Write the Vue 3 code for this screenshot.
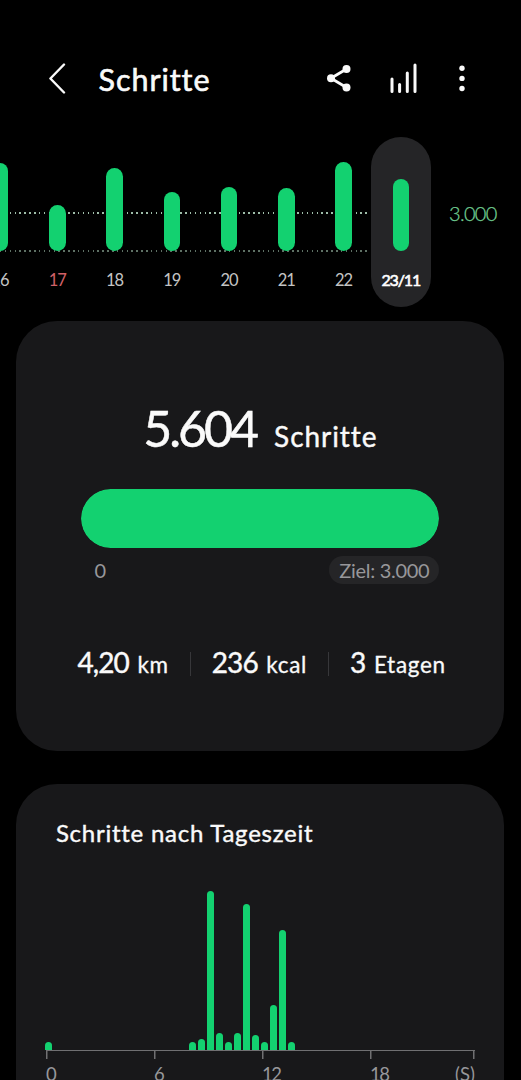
<template>
  <div class="screen">
    <header class="header">
      <button class="icon_button back" aria-label="Zurück">
        <svg width="18" height="32" viewBox="0 0 18 32">
          <path d="M16 1.5 L2.4 15.5 L16 29.5" />
        </svg>
      </button>
      <h1>Schritte</h1>
      <button class="icon_button share" aria-label="Teilen">
        <svg width="26" height="28" viewBox="0 0 26 28">
          <path d="M19.5 4 L4 13.3 L19.5 22.5" />
          <circle cx="19.5" cy="4" r="4" />
          <circle cx="4" cy="13.3" r="4" />
          <circle cx="19.5" cy="22.5" r="4" />
        </svg>
      </button>
      <button class="icon_button stats" aria-label="Statistik">
        <svg width="28" height="32" viewBox="0 0 28 32">
          <path d="M2 16 V28.5 M9.6 21.5 V28.5 M17.3 10 V28.5 M25 2 V28.5" />
        </svg>
      </button>
      <button class="icon_button more" aria-label="Mehr">
        <svg width="6" height="28" viewBox="0 0 6 28">
          <circle cx="3" cy="3.3" r="2.7" />
          <circle cx="3" cy="13.4" r="2.7" />
          <circle cx="3" cy="23.5" r="2.7" />
        </svg>
      </button>
    </header>

    <section class="week">
      <div class="line line_goal"></div>
      <div class="line line_base"></div>
      <div
        class="day"
        v-for="day in days"
        :key="day.label"
        :class="{ active: day.active, sunday: day.sunday }"
      >
        <div class="day_bar" :style="{ height: day.height + 'px' }"></div>
        <span class="day_label">{{ day.label }}</span>
      </div>
      <span class="goal_label">3.000</span>
    </section>

    <section class="card summary">
      <div class="total">
        <span class="total_value">5.604</span>
        <span class="total_unit">Schritte</span>
      </div>
      <div class="progress">
        <div class="progress_fill" :style="{ width: progress + '%' }"></div>
      </div>
      <div class="range">
        <span>0</span>
        <span class="target">Ziel: 3.000</span>
      </div>
      <div class="details">
        <div class="detail" v-for="item in details" :key="item.unit">
          <b>{{ item.value }}</b>
          <span>{{ item.unit }}</span>
        </div>
      </div>
    </section>

    <section class="card daytime">
      <h2>Schritte nach Tageszeit</h2>
      <div class="hours">
        <div
          class="hour_bar"
          v-for="(height, i) in halfHours"
          :key="i"
          :style="{ height: height + 'px' }"
        ></div>
      </div>
      <div class="axis">
        <div class="axis_part" v-for="label in ['0', '6', '12', '18']" :key="label">
          <span>{{ label }}</span>
        </div>
        <span class="axis_unit">(S)</span>
      </div>
    </section>
  </div>
</template>

<script setup>
import { computed, ref } from 'vue'

const steps = ref(5604)
const goal = ref(3000)

const days = ref([
  { label: '16', height: 88 },
  { label: '17', height: 46.5, sunday: true },
  { label: '18', height: 83.5 },
  { label: '19', height: 59.5 },
  { label: '20', height: 64.5 },
  { label: '21', height: 63.5 },
  { label: '22', height: 89 },
  { label: '23/11', height: 72, active: true },
])

const details = ref([
  { value: '4,20', unit: 'km' },
  { value: '236', unit: 'kcal' },
  { value: '3', unit: 'Etagen' },
])

// one bar for every half hour
const halfHours = ref([
  8.3, 0, 0, 0, 0, 0, 0, 0, 0, 0, 0, 0, 0, 0, 0, 0, 8.3, 11, 159.3, 17.3, 8.3, 17, 145.6, 15, 8.3,
  45, 120, 8.3,
])

const progress = computed(() => Math.min(100, (steps.value / goal.value) * 100))
</script>

<style>
body {
  background: #000;
}
</style>

<style scoped>
.screen {
  width: 521px;
  height: 1080px;
  overflow: hidden;
  background: #000;
  color: #fafafa;
  font-family: Lato, 'Open Sans', sans-serif;
  font-variant-ligatures: none;
}
.header {
  display: flex;
  align-items: center;
  height: 137px;
  padding: 20px 0 0 48px;
  box-sizing: border-box;
}
.icon_button {
  display: flex;
  padding: 0;
  border: none;
  background: none;
}
.icon_button svg {
  fill: none;
  stroke: #fafafa;
  stroke-width: 2.4;
  stroke-linecap: round;
  stroke-linejoin: round;
}
.share svg {
  stroke-width: 2.8;
}
.stats svg {
  stroke-width: 3;
}
.icon_button circle {
  fill: #fafafa;
  stroke: none;
}
.header h1 {
  width: 228px;
  margin: 0 0 0 32.5px;
  font-size: 30.5px;
  font-weight: 400;
  letter-spacing: 0.95px;
  line-height: 36px;
  -webkit-text-stroke: 0.6px;
}
.stats {
  margin-left: 37.5px;
}
.more {
  margin-left: 41px;
}
.week {
  position: relative;
  display: flex;
  height: 170px;
  margin-left: -28.6px;
}
.line {
  position: absolute;
  left: 28.6px;
  width: 369px;
  height: 1.5px;
  background: repeating-linear-gradient(90deg, #9dbca8 0 1.5px, transparent 1.5px 4.87px);
}
.line_goal {
  top: 75px;
}
.line_base {
  top: 113px;
  opacity: 0.6;
}
.day {
  position: relative;
  display: flex;
  flex: none;
  flex-direction: column;
  justify-content: flex-end;
  align-items: center;
  width: 57.25px;
  height: 170px;
}
.day_bar {
  width: 16.5px;
  border-radius: 9px;
  background: #13d170;
}
.day_label {
  height: 56px;
  padding-top: 18px;
  box-sizing: border-box;
  color: #c4c4c4;
  font-size: 16.5px;
  letter-spacing: -1px;
  line-height: 22px;
}
.sunday .day_label {
  color: #d16067;
}
.active {
  width: 60.5px;
  margin-left: -1.6px;
  border-radius: 31px;
  background: #252527;
}
.active .day_label {
  color: #fff;
  font-size: 16px;
  letter-spacing: -1.1px;
  -webkit-text-stroke: 0.6px;
}
.goal_label {
  margin: 64px 0 0 18px;
  color: #70cf92;
  font-size: 20px;
  font-weight: 300;
  letter-spacing: -0.7px;
  line-height: 24px;
  -webkit-text-stroke: 0.25px;
}
.card {
  width: 488px;
  margin: 0 auto 0 16.4px;
  border-radius: 41px;
  background: #18181a;
  box-sizing: border-box;
}
.summary {
  height: 430px;
  margin-top: 14px;
  padding: 78px 65px 0;
}
.total {
  display: flex;
  align-items: baseline;
  justify-content: center;
  height: 90px;
}
.total_value {
  font-size: 50px;
  letter-spacing: -3px;
  line-height: 58px;
  -webkit-text-stroke: 0.5px;
}
.total_unit {
  margin-left: 18px;
  font-size: 28px;
  letter-spacing: 0.95px;
  -webkit-text-stroke: 0.4px;
}
.progress {
  height: 59px;
  border-radius: 30px;
  overflow: hidden;
  background: #252527;
}
.progress_fill {
  height: 100%;
  border-radius: 30px;
  background: #13d170;
}
.range {
  display: flex;
  justify-content: space-between;
  margin-top: 8px;
  padding-left: 13px;
  color: #97979a;
  font-size: 20px;
  line-height: 28px;
}
.target {
  padding: 0 10px;
  border-radius: 14px;
  background: #252527;
  letter-spacing: -0.3px;
}
.details {
  display: flex;
  margin: 61px -8px 0 -4px;
}
.detail {
  display: flex;
  align-items: baseline;
  line-height: 34px;
  white-space: nowrap;
}
.detail b {
  font-size: 28px;
  font-weight: 400;
  letter-spacing: -0.9px;
  -webkit-text-stroke: 0.4px;
}
.detail span {
  margin-left: 8.5px;
  font-size: 22.5px;
  letter-spacing: 0.7px;
  -webkit-text-stroke: 0.3px;
}
.detail + .detail {
  margin-left: 21px;
  padding-left: 22px;
  background: linear-gradient(#37373a, #37373a) left center / 1px 24px no-repeat;
}
.daytime {
  height: 340px;
  margin-top: 33px;
  padding: 33px 28.5px 0;
}
.daytime h2 {
  margin: 0 0 0 11px;
  font-size: 24px;
  font-weight: 400;
  letter-spacing: 0.75px;
  line-height: 32px;
  -webkit-text-stroke: 0.4px;
}
.hours {
  display: flex;
  align-items: flex-end;
  gap: 2px;
  height: 201px;
}
.hour_bar {
  flex: none;
  width: 7px;
  border-radius: 4px 4px 0 0;
  background: #13d170;
}
.axis {
  position: relative;
  display: flex;
  width: 429px;
  margin-left: 1px;
  border-top: 1.5px solid #707072;
  color: #97979a;
  font-size: 18.5px;
  letter-spacing: -1.3px;
  line-height: 22px;
}
.axis_part {
  width: 108px;
  height: 40px;
  padding-top: 12px;
  box-sizing: border-box;
  background: linear-gradient(#707072, #707072) left top / 1.5px 8px no-repeat;
}
.axis_part:nth-child(4) {
  width: 105px;
  background:
    linear-gradient(#707072, #707072) left top / 1.5px 8px no-repeat,
    linear-gradient(#707072, #707072) right top / 1.5px 8px no-repeat;
}
.axis_unit {
  position: absolute;
  top: 12px;
  right: 0;
  letter-spacing: 0;
}
</style>
